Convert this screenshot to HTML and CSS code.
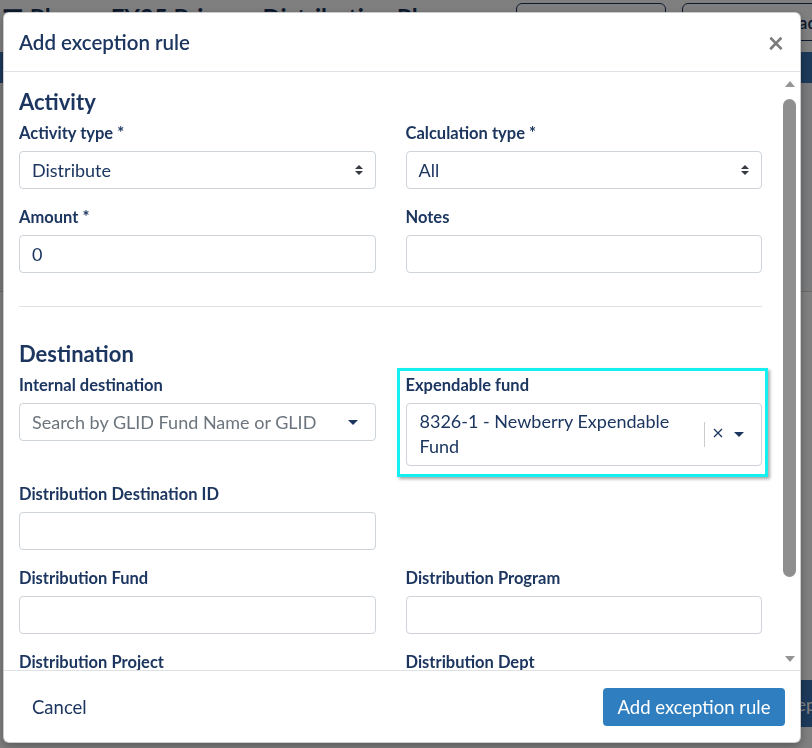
FILE: index.html
```html
<!DOCTYPE html>
<html lang="en">
<head>
<meta charset="utf-8">
<title>Plano - FY25 Distribution Plan</title>
<link rel="stylesheet" href="styles.css">
</head>
<body>
  <div class="page">
    <header class="page-top">
      <h1 class="page-title">&#9776; Plano - FY25 Primary Distribution Plan</h1>
      <div class="page-actions">
        <button class="outline-btn">Export</button>
        <button class="outline-btn outline-btn--end">Upload</button>
      </div>
    </header>
    <nav class="page-nav"></nav>
    <section class="page-panel"></section>
    <div class="page-foot">
      <button class="step-btn">Next step</button>
    </div>
  </div>

  <div class="backdrop"></div>

  <div class="modal" role="dialog" aria-labelledby="modal-title">
    <div class="modal-header">
      <h2 class="modal-title" id="modal-title">Add exception rule</h2>
      <button class="close" aria-label="Close">&times;</button>
    </div>

    <div class="modal-body">
      <div class="body-scroll">
        <h3 class="section-title">Activity</h3>
        <div class="form-grid">
          <div class="form-group">
            <label class="form-label">Activity type *</label>
            <div class="select">
              <span>Distribute</span>
              <svg class="select-arrows" width="8" height="10" viewBox="0 0 4 5"><path d="M2 0L0 2h4zm0 5L0 3h4z"/></svg>
            </div>
          </div>
          <div class="form-group">
            <label class="form-label">Calculation type *</label>
            <div class="select">
              <span>All</span>
              <svg class="select-arrows" width="8" height="10" viewBox="0 0 4 5"><path d="M2 0L0 2h4zm0 5L0 3h4z"/></svg>
            </div>
          </div>
          <div class="form-group">
            <label class="form-label">Amount *</label>
            <div class="input">0</div>
          </div>
          <div class="form-group">
            <label class="form-label">Notes</label>
            <div class="input"></div>
          </div>
        </div>

        <hr class="divider">

        <h3 class="section-title">Destination</h3>
        <div class="form-grid">
          <div class="form-group">
            <label class="form-label">Internal destination</label>
            <div class="combo">
              <span class="combo-value combo-placeholder">Search by GLID Fund Name or GLID</span>
              <span class="combo-indicators">
                <svg class="caret" width="10" height="5" viewBox="0 0 10 5"><path d="M0 0h10L5 5z"/></svg>
              </span>
            </div>
          </div>
          <div class="form-group form-group--marked">
            <label class="form-label">Expendable fund</label>
            <div class="combo combo--filled">
              <span class="combo-value">8326-1 - Newberry Expendable Fund</span>
              <span class="combo-indicators">
                <span class="combo-sep"></span>
                <svg class="clear" width="10" height="10" viewBox="0 0 10 10"><path d="M1 1L9 9M9 1L1 9"/></svg>
                <svg class="caret" width="10" height="5" viewBox="0 0 10 5"><path d="M0 0h10L5 5z"/></svg>
              </span>
            </div>
          </div>
          <div class="form-group">
            <label class="form-label">Distribution Destination ID</label>
            <div class="input"></div>
          </div>
          <div class="form-group"></div>
          <div class="form-group">
            <label class="form-label">Distribution Fund</label>
            <div class="input"></div>
          </div>
          <div class="form-group">
            <label class="form-label">Distribution Program</label>
            <div class="input"></div>
          </div>
          <div class="form-group">
            <label class="form-label">Distribution Project</label>
            <div class="input"></div>
          </div>
          <div class="form-group">
            <label class="form-label">Distribution Dept</label>
            <div class="input"></div>
          </div>
        </div>
      </div>

      <div class="scrollbar" aria-hidden="true">
        <span class="sb-btn"><svg width="10" height="6" viewBox="0 0 10 6"><path d="M5 0L10 6H0z"/></svg></span>
        <span class="sb-thumb"></span>
        <span class="sb-btn sb-btn--down"><svg width="10" height="6" viewBox="0 0 10 6"><path d="M0 0h10L5 6z"/></svg></span>
      </div>
    </div>

    <div class="modal-footer">
      <button class="btn-link">Cancel</button>
      <button class="btn-primary">Add exception rule</button>
    </div>
  </div>
</body>
</html>
```

FILE: styles.css
```css
* {
  box-sizing: border-box;
}

html,
body {
  margin: 0;
  height: 100%;
  overflow: hidden;
}

body {
  font-family: Lato, "Noto Sans", sans-serif;
  color: #1c3660;
  background: #fff;
}

button {
  font-family: inherit;
  cursor: pointer;
}

/* ---------- page behind the dialog ---------- */

.page {
  width: 832px;
  height: 748px;
  display: flex;
  flex-direction: column;
}

.page-top {
  height: 52px;
  flex: none;
  display: flex;
  justify-content: space-between;
  align-items: flex-start;
  padding-top: 3px;
}

.page-title {
  margin: 0;
  padding-left: 2px;
  font-size: 24px;
  line-height: 29px;
  font-weight: 700;
  white-space: nowrap;
  color: #1b365d;
}

.page-actions {
  display: flex;
  gap: 16px;
}

.outline-btn {
  width: 150px;
  height: 38px;
  border: 1px solid #1b365d;
  border-radius: 6px;
  background: #fff;
  color: #1b365d;
  font-size: 17px;
  font-weight: 600;
}

.outline-btn--end {
  text-align: right;
  padding-right: 14px;
}

.page-nav {
  height: 31px;
  flex: none;
  background: #3a72b5;
}

.page-panel {
  height: 209px;
  flex: none;
  background: #f3f4f6;
  border-bottom: 1px solid #d4d4d4;
}

.page-foot {
  margin-top: auto;
  display: flex;
  justify-content: flex-end;
  padding-bottom: 21px;
}

.step-btn {
  height: 47px;
  padding: 0 16px;
  border: 0;
  border-radius: 4px;
  background: #3a72b5;
  color: #fff;
  font-size: 18px;
}

.backdrop {
  position: fixed;
  inset: 0;
  background: rgba(0, 0, 0, 0.5);
}

/* ---------- dialog ---------- */

.modal {
  position: fixed;
  left: 3px;
  top: 12px;
  width: 798px;
  height: 731px;
  display: flex;
  flex-direction: column;
  background: #fff;
  border: 1px solid rgba(0, 0, 0, 0.2);
  border-radius: 6px;
  box-shadow: 0 3px 9px rgba(0, 0, 0, 0.3);
  overflow: hidden;
}

.modal-header {
  height: 59px;
  flex: none;
  display: flex;
  align-items: center;
  justify-content: space-between;
  padding: 0 15px;
  border-bottom: 1px solid #dee2e6;
}

.modal-title {
  margin: 0;
  font-size: 20.5px;
  line-height: 26px;
  font-weight: 600;
  color: #1c3660;
}

.close {
  border: 0;
  background: none;
  padding: 0 1px 0 0;
  font-size: 28px;
  line-height: 1;
  font-weight: 700;
  color: #7b7b7b;
}

.modal-body {
  flex: 1;
  min-height: 0;
  display: flex;
}

.body-scroll {
  flex: 1;
  min-width: 0;
  overflow: hidden;
  padding: 17px 20px 0 15px;
}

.section-title {
  margin: 0 0 7px;
  font-size: 22px;
  line-height: 26px;
  font-weight: 700;
}

.form-grid {
  display: grid;
  grid-template-columns: 1fr 1fr;
  column-gap: 30px;
  row-gap: 17px;
}

.form-group {
  position: relative;
  display: flex;
  flex-direction: column;
}

.form-label {
  margin-bottom: 7px;
  font-size: 16.5px;
  line-height: 22px;
  font-weight: 700;
}

.input,
.select,
.combo {
  min-height: 38px;
  border: 1px solid #ced4da;
  border-radius: 4px;
  background: #fff;
  font-size: 18px;
  line-height: 25px;
}

.input {
  display: flex;
  align-items: center;
  padding: 0 12px;
}

.select {
  display: flex;
  align-items: center;
  justify-content: space-between;
  padding: 0 12px;
}

.select-arrows {
  fill: #343a40;
}

.divider {
  margin: 33px 0 34px;
  border: 0;
  border-top: 1px solid #dfe3e8;
}

.combo {
  display: flex;
  align-items: center;
  padding-left: 12px;
}

.combo--filled {
  padding-top: 5px;
  padding-bottom: 6px;
  padding-left: 13px;
}

.combo-value {
  flex: 1;
  min-width: 0;
}

.combo--filled .combo-value {
  padding-right: 16px;
}

.combo-placeholder {
  color: #6c757d;
}

.combo-indicators {
  display: flex;
  align-items: center;
  padding-right: 17px;
}

.combo-sep {
  width: 1px;
  height: 25px;
  margin-right: 8px;
  background: #cccccc;
}

.clear {
  margin-right: 11px;
  margin-top: -3px;
  stroke: #1c3660;
  stroke-width: 1.3;
}

.caret {
  fill: #1c3660;
}

/* highlight frame around the fund picker */
.form-group--marked::after {
  content: "";
  position: absolute;
  top: -6px;
  left: -9px;
  right: -6px;
  bottom: -11px;
  border: 3px solid #14f0f0;
  box-shadow: 2px 2px 3px rgba(0, 0, 0, 0.35);
  pointer-events: none;
}

/* scroll track of the dialog body */
.scrollbar {
  width: 15px;
  margin-right: 3px;
  flex: none;
  display: flex;
  flex-direction: column;
  align-items: center;
  padding: 4px 0;
}

.sb-btn {
  height: 15px;
  display: flex;
  align-items: center;
  justify-content: center;
  fill: #959595;
}

.sb-btn--down {
  margin-top: auto;
}

.sb-thumb {
  width: 13px;
  height: 478px;
  margin-top: 8px;
  border-radius: 7px;
  background: #8f8f8f;
}

.modal-footer {
  height: 72px;
  flex: none;
  display: flex;
  align-items: center;
  justify-content: space-between;
  padding: 0 15px;
  border-top: 1px solid #dee2e6;
}

.btn-link {
  height: 38px;
  padding: 0 13px;
  border: 0;
  background: none;
  color: #1c3660;
  font-size: 18.5px;
}

.btn-primary {
  height: 38px;
  padding: 0 14.5px;
  border: 0;
  border-radius: 4px;
  background: #2f7ebf;
  color: #fff;
  font-size: 18.5px;
}
```
